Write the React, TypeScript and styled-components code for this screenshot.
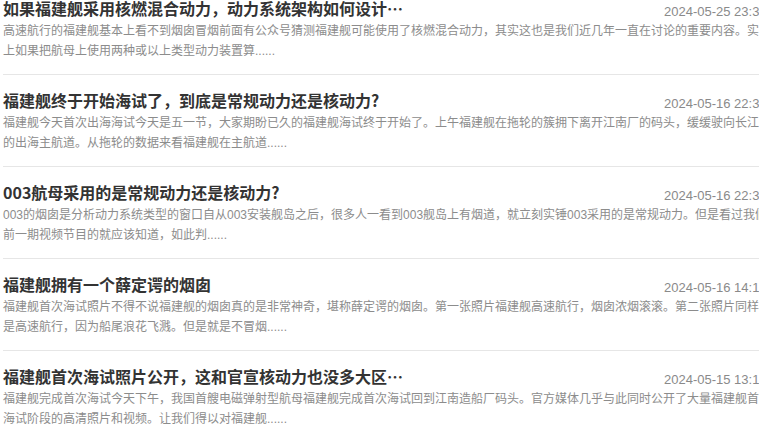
import React from "react";
import styled, { createGlobalStyle } from "styled-components";

const GlobalStyle = createGlobalStyle`
  html, body {
    margin: 0;
    padding: 0;
    background: #ffffff;
    overflow: hidden;
  }
  body {
    font-family: "Noto Sans CJK SC", "Noto Sans", sans-serif;
  }
`;

const Page = styled.div`
  width: 800px;
  padding-left: 3px;
`;

const List = styled.ul`
  list-style: none;
  margin: -17px 0 0 0;
  padding: 0;
`;

const Item = styled.li`
  width: 778px;
  padding: 13px 0 13px 0;
  border-bottom: 1px solid #e6e6e6;
`;

const Header = styled.div`
  display: grid;
  grid-template-columns: 661px auto;
  align-items: center;
  margin-bottom: 1px;
`;

const Title = styled.h3`
  margin: 0;
  font-family: "Noto Sans CJK SC", sans-serif;
  font-size: 16px;
  line-height: 24px;
  font-weight: 700;
  color: #333333;
  white-space: nowrap;
`;

const DateText = styled.span`
  font-family: "Liberation Sans", Arial, sans-serif;
  font-size: 13px;
  line-height: 16px;
  color: #8a8a8a;
  white-space: nowrap;
  padding-top: 8px;
`;

const Desc = styled.p`
  margin: 0;
  width: 772px;
  font-family: "Liberation Sans", "Noto Sans CJK SC", sans-serif;
  font-size: 12px;
  line-height: 20px;
  color: #8c8c8c;
`;

type Article = { title: string; date: string; desc: string };

const articles: Article[] = [
  {
    title: "如果福建舰采用核燃混合动力，动力系统架构如何设计…",
    date: "2024-05-25 23:30",
    desc:
      "高速航行的福建舰基本上看不到烟囱冒烟前面有公众号猜测福建舰可能使用了核燃混合动力，其实这也是我们近几年一直在讨论的重要内容。实际上如果把航母上使用两种或以上类型动力装置算......",
  },
  {
    title: "福建舰终于开始海试了，到底是常规动力还是核动力?",
    date: "2024-05-16 22:30",
    desc:
      "福建舰今天首次出海海试今天是五一节，大家期盼已久的福建舰海试终于开始了。上午福建舰在拖轮的簇拥下离开江南厂的码头，缓缓驶向长江口的出海主航道。从拖轮的数据来看福建舰在主航道......",
  },
  {
    title: "003航母采用的是常规动力还是核动力?",
    date: "2024-05-16 22:30",
    desc:
      "003的烟囱是分析动力系统类型的窗口自从003安装舰岛之后，很多人一看到003舰岛上有烟道，就立刻实锤003采用的是常规动力。但是看过我们前一期视频节目的就应该知道，如此判......",
  },
  {
    title: "福建舰拥有一个薛定谔的烟囱",
    date: "2024-05-16 14:10",
    desc:
      "福建舰首次海试照片不得不说福建舰的烟囱真的是非常神奇，堪称薛定谔的烟囱。第一张照片福建舰高速航行，烟囱浓烟滚滚。第二张照片同样也是高速航行，因为船尾浪花飞溅。但是就是不冒烟......",
  },
  {
    title: "福建舰首次海试照片公开，这和官宣核动力也没多大区…",
    date: "2024-05-15 13:10",
    desc:
      "福建舰完成首次海试今天下午，我国首艘电磁弹射型航母福建舰完成首次海试回到江南造船厂码头。官方媒体几乎与此同时公开了大量福建舰首次海试阶段的高清照片和视频。让我们得以对福建舰......",
  },
];

export default function App() {
  return (
    <>
      <GlobalStyle />
      <Page>
        <List>
          {articles.map((a, i) => (
            <Item key={i}>
              <Header>
                <Title>{a.title}</Title>
                <DateText>{a.date}</DateText>
              </Header>
              <Desc>{a.desc}</Desc>
            </Item>
          ))}
        </List>
      </Page>
    </>
  );
}
